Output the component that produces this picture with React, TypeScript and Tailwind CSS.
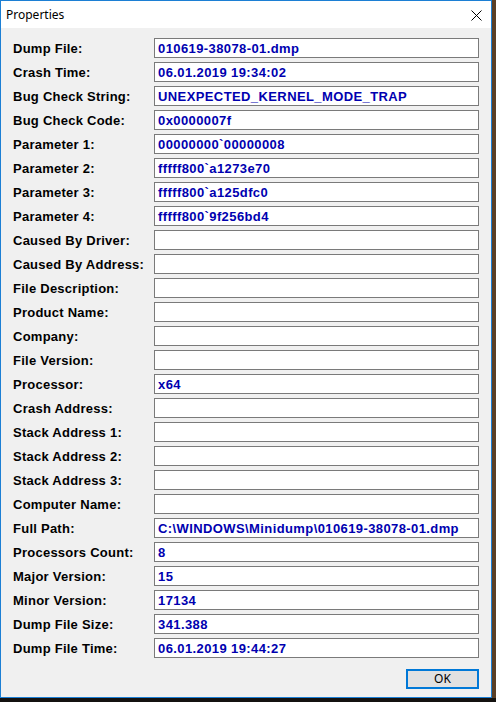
import React from "react";

const rows: [string, string][] = [
  ["Dump File:", "010619-38078-01.dmp"],
  ["Crash Time:", "06.01.2019 19:34:02"],
  ["Bug Check String:", "UNEXPECTED_KERNEL_MODE_TRAP"],
  ["Bug Check Code:", "0x0000007f"],
  ["Parameter 1:", "00000000`00000008"],
  ["Parameter 2:", "fffff800`a1273e70"],
  ["Parameter 3:", "fffff800`a125dfc0"],
  ["Parameter 4:", "fffff800`9f256bd4"],
  ["Caused By Driver:", ""],
  ["Caused By Address:", ""],
  ["File Description:", ""],
  ["Product Name:", ""],
  ["Company:", ""],
  ["File Version:", ""],
  ["Processor:", "x64"],
  ["Crash Address:", ""],
  ["Stack Address 1:", ""],
  ["Stack Address 2:", ""],
  ["Stack Address 3:", ""],
  ["Computer Name:", ""],
  ["Full Path:", "C:\\WINDOWS\\Minidump\\010619-38078-01.dmp"],
  ["Processors Count:", "8"],
  ["Major Version:", "15"],
  ["Minor Version:", "17134"],
  ["Dump File Size:", "341.388"],
  ["Dump File Time:", "06.01.2019 19:44:27"],
];

export default function App() {
  return (
    <div className="w-[496px] h-[702px] bg-[#141210] flex flex-col">
      <div className="flex">
        <div className="w-[492px] h-[698px] border border-[#1c7fd4] bg-[#f0f0f0] flex flex-col">
          {/* title bar */}
          <div className="h-[27px] bg-white flex items-center justify-between pl-[5px] pr-[9px] shrink-0">
            <span className="text-[12px] text-black font-['Noto_Sans',sans-serif] leading-none">Properties</span>
            <svg width="11" height="11" viewBox="0 0 11 11" className="mt-[1px]">
              <path d="M0.5 0.5 L10.5 10.5 M10.5 0.5 L0.5 10.5" stroke="#000" strokeWidth="1" />
            </svg>
          </div>
          {/* fields */}
          <div className="flex-1 flex flex-col pt-[10px] pl-[12px] pr-[12px] pb-[8px]">
            <div className="grid grid-cols-[141px_1fr] gap-y-[4px]">
              {rows.map(([label, value]) => (
                <React.Fragment key={label}>
                  <div className="h-[20px] flex items-center pt-[1px] text-[13px] tracking-[0.25px] font-bold text-black font-['Liberation_Sans',Arial,sans-serif] whitespace-nowrap">
                    {label}
                  </div>
                  <div className="h-[20px] border border-[#7a7a7a] bg-white flex items-center pl-[3px] pt-[1px] text-[13px] tracking-[0.4px] font-bold text-[#0000b0] font-['Liberation_Sans',Arial,sans-serif] whitespace-nowrap overflow-hidden">
                    {value}
                  </div>
                </React.Fragment>
              ))}
            </div>
            <div className="flex justify-end mt-[11px]">
              <button className="w-[73px] h-[20px] border-2 border-[#0078d7] bg-[#e1e1e1] text-[12px] text-black font-['Noto_Sans',sans-serif] leading-none flex items-center justify-center">
                OK
              </button>
            </div>
          </div>
        </div>
        <div className="w-[4px] h-[698px] bg-[#5a3f26]" />
      </div>
    </div>
  );
}
